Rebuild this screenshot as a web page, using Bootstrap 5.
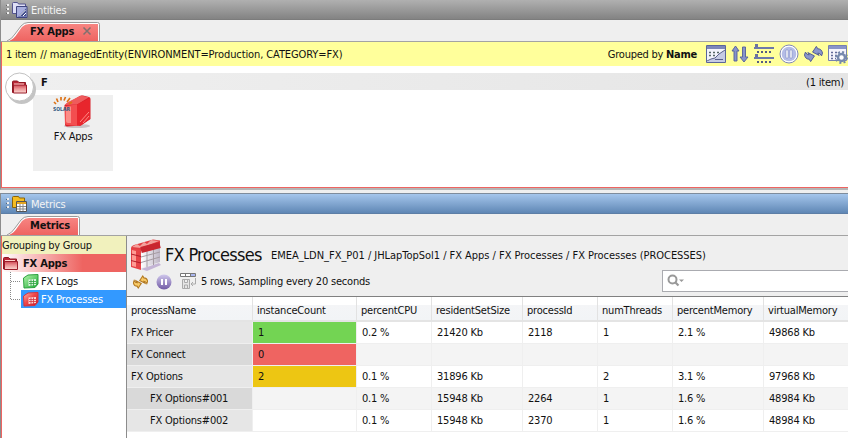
<!DOCTYPE html>
<html lang="en">
<head>
<meta charset="utf-8">
<title>Entities and Metrics</title>
<link href="https://cdn.jsdelivr.net/npm/bootstrap@5.3.0/dist/css/bootstrap.min.css" rel="stylesheet">
<style>
html,body{height:438px;overflow:hidden}
body{font:11px/14px "DejaVu Sans Condensed","DejaVu Sans",sans-serif;letter-spacing:-.2px;color:#111;background:#efefef}
svg{display:block;flex:none}
.defs-holder{position:absolute}
.pane{border-left:1px solid #8c8c8c}
.upper{height:190px;border-bottom:2px solid #b5b5b5}
.lower{margin-top:3px;height:245px}
.titlebar{height:20px;padding-left:4px;color:#f4f4f4;background:linear-gradient(#b0b0b0,#838383);border-bottom:1px solid #7c7c7c}
.titlebar span,.tab-shape span,.query span,.group-line b,.group-line span,.tree-head span,.tree-app span,.leaf span{padding-top:2px}
.lower .titlebar{height:21px;background:linear-gradient(#a5c6ec,#5f87b5);border-top:1px solid #7e8c9c;border-bottom:1px solid #5d7ea6}
.tabs{height:22px;padding-left:6px;border-bottom:1px solid #a3a3a3}
.tab-shape{position:relative;height:20px;font-weight:700;padding-left:23px}
.tab-edge{position:absolute;left:0;top:0}
.tab-label{position:relative}
.upper-body{border-left:1px solid #ee6461;border-bottom:1px solid #ee6461;height:146px;background:#fff;position:relative}
.query{height:24px;background:#ffff9b;padding-left:4px;letter-spacing:-.25px}
.query-path{letter-spacing:-.1px;margin-left:4px}
.tools{gap:5px;margin-left:9px}
.group-line{height:17px;background:linear-gradient(90deg,#efefef,#e5e5e5);margin:7px 0 0 28px;padding:0 4px 0 11px}
.group-count{font:10px/14px "DejaVu Sans",sans-serif;letter-spacing:-.25px}
.tile{width:80px;height:76px;background:#efefef;margin:5px 0 0 31px}
.round-folder{position:absolute;left:2px;top:30px}
.tree{width:125px;background:#fff;border-left:1px solid #ee6461}
.tree-head{height:18px;background:#f1f1bd;letter-spacing:-.25px}
.tree-app{height:18px;background:linear-gradient(90deg,#fff,#ee6461 65%);font-weight:700}
.tree-item{height:18px}
.leaf{padding-left:2px;gap:2px}
.leaf.picked{background:#39f;color:#fff}
.main-side{border-left:1px solid #8c8c8c;min-width:0}
.heading{height:34px;padding:3px 0 0 4px}
.title-line{height:32px}
.big-title{font-size:18px;line-height:24px;letter-spacing:-.72px;width:110px;padding-left:4px}
.crumbs{letter-spacing:-.03px;padding-top:2px}
.status{height:26px;padding-left:6px}
.status-tools{padding-top:3px;gap:8px}
.status-text{margin-left:-4px}
.search{width:200px;height:22px;background:#fff;border:1px solid #aaabb0;margin-right:-14px;padding-left:4px}
.grid-wrap{border-top:1px solid #808080;background:#fff;height:142px}
.grid-wrap table{table-layout:fixed;width:727px;border-collapse:separate;border-spacing:0}
.grid-wrap td,.grid-wrap th{height:22px;padding:0 0 0 5px;font-weight:400;border-right:1px solid #efefef;border-bottom:1px solid #efefef;white-space:nowrap;line-height:14px;vertical-align:middle}
.grid-wrap th{height:25px;padding:4px 0 0 4px;border-right:1px solid #e2e2e2;border-bottom:2px solid #e4e4e4;background:linear-gradient(#fff 35%,#f4f5f7 36%,#f2f4f6)}
.grid-wrap td:first-child{background:#e6e6e6;padding-left:4px}
.grid-wrap tbody tr:nth-child(even) td{background:#f4f4f4}
.grid-wrap tbody tr:nth-child(even) td:first-child{background:#d9d9d9}
.grid-wrap td.child-row{padding-left:23px}
.grid-wrap tbody tr td.sev-ok{background:#73d453}
.grid-wrap tbody tr td.sev-bad{background:#ef6461}
.grid-wrap tbody tr td.sev-warn{background:#edc613}
</style>
</head>
<body>
<svg class="defs-holder" width="0" height="0">
<defs>
<linearGradient id="red" x2="1" y2="1"><stop stop-color="#ffb9b2"/><stop offset=".45" stop-color="#ef494b"/><stop offset="1" stop-color="#c91525"/></linearGradient>
<linearGradient id="pink" y2="1" x2="0"><stop stop-color="#cf4a57"/><stop offset=".4" stop-color="#e98a8c"/><stop offset="1" stop-color="#fbd9d3"/></linearGradient>
<linearGradient id="green" x2="1" y2="1"><stop stop-color="#b8f7ae"/><stop offset="1" stop-color="#18a832"/></linearGradient>
<linearGradient id="violet" x2="0" y2="1"><stop stop-color="#d0c8ec"/><stop offset="1" stop-color="#715aa5"/></linearGradient>
<linearGradient id="tabred" x2="0" y2="1"><stop stop-color="#f78582"/><stop offset="1" stop-color="#ee6461"/></linearGradient>
<linearGradient id="shade" x2="1" y2="0"><stop stop-color="#fff"/><stop offset="1" stop-color="#bdb5c5"/></linearGradient>
<symbol id="folder" viewBox="0 0 16 16"><path d="M.5 14V3.500q0-1 1-1h4l1.500 1.500h6.500v10z" fill="#b92737" stroke="#8e1824"/><path d="M1.500 6.500h13V14.500h-13z" fill="url(#pink)" stroke="#9b1d2a"/><path d="M2 5.500h10" stroke="#ffd3cd"/></symbol>
<symbol id="sync" viewBox="0 0 20 20"><path d="M9 8l4-6 1.500 2.500q4 0 5 4.500l-1 3q-1.500-3-4-3l1.500 2.500z"/><path d="M11 12l-4 6-1.500-2.500q-4 0-5-4.500l1-3q1.500 3 4 3L4 8.500z"/></symbol>
<symbol id="leafcube" viewBox="0 0 16 16"><path d="M.5 5L5 2l10-.5V11l-3 3.500-11 .5z"/><path d="M5.500 6.500l7.500-.5V12l-7.500 1z" fill="#fff" fill-opacity=".8" stroke="none"/><path d="M6 8.500h7M6 10.500h7M8 6.500V13M10.500 6.500V13" stroke-width=".8"/></symbol>
</defs>
</svg>

<section class="pane upper">
  <div class="titlebar d-flex align-items-center">
    <svg width="26" height="18" viewBox="0 0 26 18"><g fill="#eee"><path d="M2 3h2v2h-2zM2 7h2v2h-2zM2 11h2v2h-2z"/></g><g fill="#666"><path d="M1 4h1v1h-1zM1 8h1v1h-1zM1 12h1v1h-1z"/></g><path d="M7.500 12.500V2.500q0-1 1-1h4l1 1.500h7v9.500z" fill="#dfdff5" stroke="#55558f"/><path d="M11.500 5.500h10.500v11h-10.500z" fill="#a8aede" stroke="#3e447f"/><path d="M13 15.500l8-8v8z" fill="#45508f"/><path d="M14.500 15l6-6M18 15l3-3" stroke="#fff"/></svg>
    <span>Entities</span>
  </div>
  <div class="tabs d-flex align-items-end">
    <div class="tab-shape d-flex align-items-center">
      <svg class="tab-edge" width="94" height="20" viewBox="0 0 94 20"><path d="M0 20Q5 18 8 13L14 5Q17 1.500 21 1.500H90.500Q92.500 1.500 92.500 3.500V20" fill="#fff" stroke="#9a9a9a"/><path d="M2 20Q7 18 10 13L15 6Q18 3 22 3H91V20z" fill="url(#tabred)"/></svg>
      <span class="tab-label">FX Apps</span>
      <svg class="tab-label ms-2" width="10" height="10" viewBox="0 -1 10 10"><path d="M1.500 .5l7 7M8.500 .5l-7 7" stroke="#81706f" stroke-width="1.500"/></svg>
    </div>
  </div>
  <div class="upper-body">
    <div class="query d-flex align-items-center">
      <span>1 item</span><span class="query-path">// managedEntity(ENVIRONMENT=Production, CATEGORY=FX)</span>
      <span class="ms-auto">Grouped by <b>Name</b></span>
      <div class="tools d-flex align-items-center">
        <svg width="20" height="20" viewBox="0 0 20 20"><path d="M.5 1.500h19v17H.5z" fill="#f2f3fb" stroke="#5a659b"/><path d="M1 2h18v3H1z" fill="#7c87ba"/><path d="M3 8.500h12M3 11.500h7" stroke="#566" stroke-width="1.500" stroke-dasharray="2 2"/><path d="M1 18l4-3 4-1 4-4 6-4v12z" fill="#c6cbe4"/><path d="M1 17l4-2 4-1 4-4 6-4M9 15.500h8" fill="none" stroke="#59618b"/></svg>
        <svg width="18" height="20" viewBox="0 0 18 20"><path d="M4.500 2L8 7H6v10H3V7H1zM13 18l-4-5h2.500V3h3v10H17z" fill="#8793cb" stroke="#515d99" stroke-width=".9"/></svg>
        <svg width="20" height="20" viewBox="0 0 20 20"><path d="M1 0h3v3H1zM1 10h3v3H1z" fill="#6b72a0"/><path d="M0 4h20M0 14h20" stroke="#6d78a9" stroke-width="2"/><path d="M3 8h16M3 18h16" stroke="#555c83" stroke-width="2" stroke-dasharray="2 2"/></svg>
        <svg width="20" height="20" viewBox="0 0 20 20"><circle cx="10" cy="10" r="9" fill="#fff" stroke="#7e86b8"/><circle cx="10" cy="10" r="7.300" fill="#b4bce6"/><path d="M7 6h2v8H7zM11 6h2v8h-2z" fill="#fff" stroke="#7681b8" stroke-width=".5"/></svg>
        <svg width="19" height="20" viewBox="0 0 20 20" fill="#8b97cc" stroke="#4e5992"><use href="#sync"/></svg>
        <svg width="20" height="20" viewBox="0 0 20 20"><path d="M.5 1.500h18v15H.5z" fill="#f4f4fc" stroke="#7680af"/><path d="M1 2h17v3H1z" fill="#8995c9"/><path d="M3 8.500h9M3 11.500h6M3 14.500h5" stroke="#636b99" stroke-width="1.500" stroke-dasharray="2 2"/><circle cx="13.500" cy="13.500" r="5.500" fill="none" stroke="#7486aa" stroke-width="2" stroke-dasharray="2 2.320"/><circle cx="13.500" cy="13.500" r="3.500" fill="#fff" stroke="#7689ad" stroke-width="2.500"/></svg>
      </div>
    </div>
    <div class="group-line d-flex align-items-center justify-content-between"><b>F</b><span class="group-count">(1 item)</span></div>
    <svg class="round-folder" width="34" height="34" viewBox="0 0 34 34"><circle cx="17.500" cy="17.500" r="14.500" fill="#c4c4c4"/><circle cx="15.500" cy="15" r="14" fill="#fff" stroke="#c2c2c2"/><use href="#folder" x="8" y="6.500" width="16" height="16"/></svg>
    <div class="tile d-flex flex-column align-items-center">
      <svg width="40" height="35" viewBox="0 0 40 35"><ellipse cx="24" cy="31" rx="13" ry="2" fill="#c9c3c5"/><path d="M11.500 10L26 1.500Q28 0 30 .6L36 2q1.500.3 1.500 2v20L28 30.500l-14 1q-2 0-2-2z" fill="#d71f29"/><path d="M12 10q1-2 3-3L26 1.500q2-1.200 4-.6l6 1.300L24 9.500z" fill="#ef5b5c"/><path d="M24 9.500l13-6.500v21l-10 7-3-1z" fill="#e8262d"/><path d="M12 11l12-1.500V31l-10-1q-2 0-2-2z" fill="#f34e50"/><path d="M13 12l5-.5V28h-3q-2 0-2-2z" fill="#fb8c87"/><path d="M27 27l9-10M30 28l6-7" stroke="#ff8c85"/><path d="M3 9L1 7M5 7L3.500 3.500M8 5.500V2M11 5.500l1.500-3.500M14 7l3-4M16 9l3-2" stroke="#dc7216" stroke-width="1.700"/><text x="0" y="15.500" textLength="17" lengthAdjust="spacingAndGlyphs" font-family="DejaVu Sans" font-size="5.500" font-weight="700" letter-spacing="0" fill="#375a80">SOLAR</text></svg>
      <span>FX Apps</span>
    </div>
  </div>
</section>

<section class="pane lower d-flex flex-column">
  <div class="titlebar d-flex align-items-center">
    <svg width="26" height="18" viewBox="0 0 26 18"><g fill="#eee"><path d="M2 3h2v2h-2zM2 7h2v2h-2zM2 11h2v2h-2z"/></g><g fill="#567"><path d="M1 4h1v1h-1zM1 8h1v1h-1zM1 12h1v1h-1z"/></g><path d="M7.500 12.500V2.500q0-1 1-1h5l1 1.500h5v9.500z" fill="#f4bd22" stroke="#8b640a"/><path d="M11.500 6.500h10v10h-10z" fill="#fff" stroke="#555"/><path d="M12 8h9" stroke="#e3a521" stroke-width="2"/><path d="M12 11.500h9M12 14h9M15 9v7M18 9v7" stroke="#888"/></svg>
    <span>Metrics</span>
  </div>
  <div class="tabs d-flex align-items-end">
    <div class="tab-shape d-flex align-items-center">
      <svg class="tab-edge" width="74" height="20" viewBox="0 0 74 20"><path d="M0 20Q5 18 8 13L14 5Q17 1.500 21 1.500H70.500Q72.500 1.500 72.500 3.500V20" fill="#fff" stroke="#9a9a9a"/><path d="M2 20Q7 18 10 13L15 6Q18 3 22 3H71V20z" fill="url(#tabred)"/></svg>
      <span class="tab-label">Metrics</span>
    </div>
  </div>
  <div class="d-flex flex-grow-1">
    <div class="tree flex-shrink-0">
      <div class="tree-head d-flex align-items-center"><span>Grouping by Group</span></div>
      <div class="tree-app d-flex align-items-center"><svg class="me-1" width="17" height="16" viewBox="-1 0 17 16"><use href="#folder" width="16" height="16"/></svg><span>FX Apps</span></div>
      <div class="tree-item d-flex"><svg width="19" height="18" viewBox="0 0 19 18"><path d="M8.500 0v18M9 9.500h10" fill="none" stroke="#888" stroke-dasharray="1 1"/></svg>
        <div class="leaf d-flex align-items-center flex-grow-1"><svg width="16" height="16" fill="url(#green)" stroke="#2ba13d"><use href="#leafcube"/></svg><span>FX Logs</span></div></div>
      <div class="tree-item d-flex"><svg width="19" height="18" viewBox="0 0 19 18"><path d="M8.500 0v9M9 9.500h10" fill="none" stroke="#888" stroke-dasharray="1 1"/></svg>
        <div class="leaf picked d-flex align-items-center flex-grow-1"><svg width="16" height="16" fill="url(#red)" stroke="#d3343f"><use href="#leafcube"/></svg><span>FX Processes</span></div></div>
    </div>
    <div class="main-side flex-grow-1">
      <div class="heading d-flex">
        <svg width="30" height="32" viewBox="0 0 30 32"><path d="M10 30l18-6 2 2-14 6z" fill="#c4b4d5"/><path d="M0 9Q0 7 3 6L22 .5l7 1v5L10 12l-10-2z" fill="#e33c40"/><path d="M1 8l5-3 3 2 4-4 3 2 4-4 8 1-18 7z" fill="#f3a09b"/><path d="M10 12l19-5v16L10 29z" fill="url(#shade)"/><path d="M10 18l19-5M10 23.500L29 18M16 11v17M22.500 9v17" stroke="#a59ba2"/><path d="M10 11L29 6" stroke="#c9262f" stroke-width="6"/><path d="M0 9l10 2v20L0 28z" fill="#e64347"/><path d="M1 11l4 1v16l-4-1z" fill="#ff9b94"/><path d="M0 15l10 2.500M0 21.500L10 24" stroke="#b21d29"/></svg>
        <div class="title-line d-flex align-items-center"><span class="big-title text-nowrap">FX Processes</span><span class="crumbs text-nowrap">EMEA_LDN_FX_P01 / JHLapTopSol1 / FX Apps / FX Processes / FX Processes (PROCESSES)</span></div>
      </div>
      <div class="status d-flex align-items-start">
        <div class="status-tools d-flex align-items-center">
          <svg width="15" height="16" viewBox="0 0 20 20" fill="#f8ca67" stroke="#b27920" stroke-width="1.400"><use href="#sync"/></svg>
          <svg width="16" height="16" viewBox="0 0 16 16"><circle cx="8" cy="8" r="7.500" fill="url(#violet)"/><path d="M5 5h2v6H5zM9 5h2v6H9z" fill="#fff"/></svg>
          <svg width="17" height="17" viewBox="0 0 17 17"><path d="M.5.5h15v3H.5z" fill="#fff" stroke="#777"/><path d="M11 1h4v2h-4z" fill="#aab6ef"/><path d="M5.500 1v2M10.500 1v2" stroke="#777"/><path d="M2.500 6.500h7v9h-7zM4.500 6.500v3h3v-3M4.500 15v-3h3v3" fill="#e5e5e5" stroke="#aaa"/><path d="M15.500 5v6h-4M13 9l-2 2 2 2" fill="none" stroke="#aaa"/></svg>
          <span class="status-text text-nowrap">5 rows, Sampling every 20 seconds</span>
        </div>
        <div class="search ms-auto d-flex align-items-center"><svg width="18" height="14" viewBox="0 0 18 14"><circle cx="5.500" cy="5.500" r="4" fill="none" stroke="#999" stroke-width="2"/><path d="M8.500 8.500l3 3" stroke="#999" stroke-width="2.200"/><path d="M12 5.500h5l-2.500 2.500z" fill="#999"/></svg></div>
      </div>
      <div class="grid-wrap">
        <table>
          <colgroup><col style="width:126px"><col style="width:104px"><col style="width:75px"><col style="width:91px"><col style="width:75px"><col style="width:75px"><col style="width:91px"><col></colgroup>
          <thead><tr><th>processName</th><th>instanceCount</th><th>percentCPU</th><th>residentSetSize</th><th>processId</th><th>numThreads</th><th>percentMemory</th><th>virtualMemory</th></tr></thead>
          <tbody>
            <tr><td>FX Pricer</td><td class="sev-ok">1</td><td>0.2 %</td><td>21420 Kb</td><td>2118</td><td>1</td><td>2.1 %</td><td>49868 Kb</td></tr>
            <tr><td>FX Connect</td><td class="sev-bad">0</td><td></td><td></td><td></td><td></td><td></td><td></td></tr>
            <tr><td>FX Options</td><td class="sev-warn">2</td><td>0.1 %</td><td>31896 Kb</td><td></td><td>2</td><td>3.1 %</td><td>97968 Kb</td></tr>
            <tr><td class="child-row">FX Options#001</td><td></td><td>0.1 %</td><td>15948 Kb</td><td>2264</td><td>1</td><td>1.6 %</td><td>48984 Kb</td></tr>
            <tr><td class="child-row">FX Options#002</td><td></td><td>0.1 %</td><td>15948 Kb</td><td>2370</td><td>1</td><td>1.6 %</td><td>48984 Kb</td></tr>
          </tbody>
        </table>
      </div>
    </div>
  </div>
</section>
<script src="https://cdn.jsdelivr.net/npm/bootstrap@5.3.0/dist/js/bootstrap.bundle.min.js"></script>
</body>
</html>
